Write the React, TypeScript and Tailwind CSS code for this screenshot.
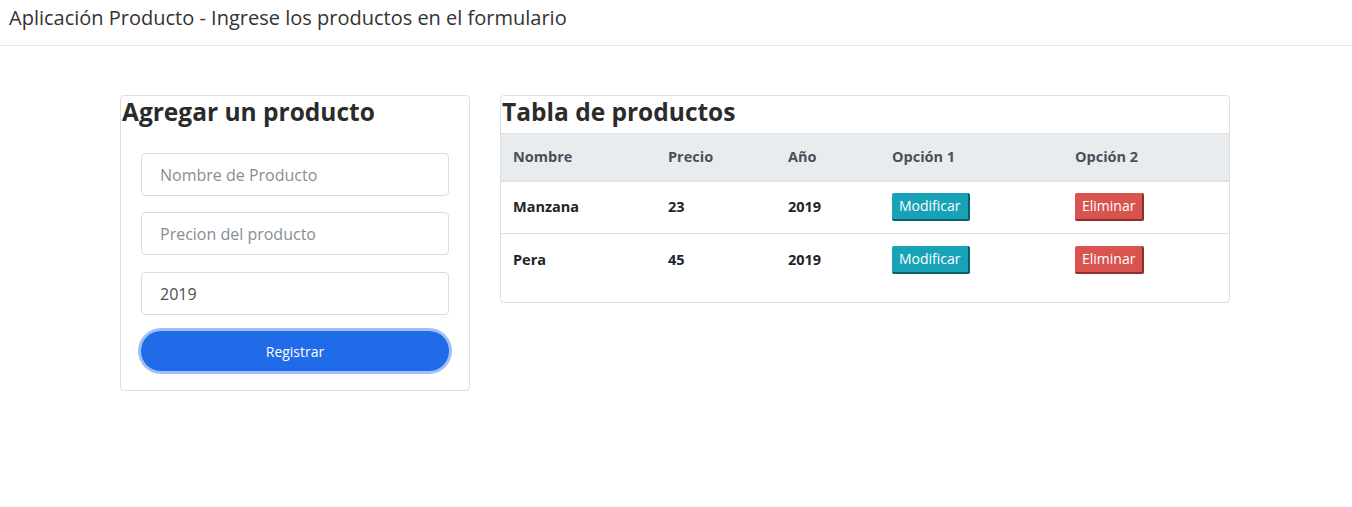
import React from "react";

const font = { fontFamily: '"Open Sans", "Noto Sans", sans-serif' };

function Btn({ kind, children }: { kind: "info" | "danger"; children: React.ReactNode }) {
  const cls =
    kind === "info"
      ? "bg-[#17a2b8] border-r-2 border-b-2 border-[#0e5f6c]"
      : "bg-[#d9534f] border-r-2 border-b-2 border-[#8e2f2c]";
  return (
    <button className={`${cls} h-[28px] px-[7px] rounded-[2px] text-white text-[14px] leading-none align-middle`}>
      {children}
    </button>
  );
}

export default function App() {
  const rows = [
    { n: "Manzana", p: "23", a: "2019" },
    { n: "Pera", p: "45", a: "2019" },
  ];
  const inputCls =
    "h-[43px] w-full border border-[#dcdcdc] rounded-[4px] px-[18px] text-[16px] text-[#495057] placeholder:text-[#868e96] outline-none";
  return (
    <div className="min-h-[507px] bg-white text-[#212529]" style={font}>
      <div className="h-[46px] border-b border-[#e5e5e5] pl-[9px] pt-[4px] text-[20px] leading-[28px] text-[#333]">
        Aplicación Producto - Ingrese los productos en el formulario
      </div>
      <div className="flex items-start gap-[30px] pl-[120px] pt-[49px]">
        <div className="w-[350px] border border-[#dfdfdf] rounded-[4px] pb-[19px]">
          <h2 className="text-[24.5px] font-bold leading-[32px] text-[#2b2b2b] pl-[1px]">Agregar un producto</h2>
          <div className="px-[20px] pt-[25px] flex flex-col">
            <input className={inputCls} placeholder="Nombre de Producto" />
            <input className={`${inputCls} mt-[16px]`} placeholder="Precion del producto" />
            <input className={`${inputCls} mt-[17px]`} defaultValue="2019" />
            <button className="mt-[16px] h-[40px] rounded-[20px] bg-[#206be8] text-white text-[14px] ring-[3px] ring-[#9ec0f7]">
              Registrar
            </button>
          </div>
        </div>
        <div className="w-[730px] border border-[#dfdfdf] rounded-[4px] pb-[15px]">
          <h2 className="text-[24.5px] font-bold leading-[32px] text-[#2b2b2b] pl-[1px] pb-[5px]">Tabla de productos</h2>
          <table className="w-full border-collapse text-[14.5px]">
            <thead>
              <tr className="bg-[#e9ecef] border-t border-[#dee2e6] border-b-2 text-[#495057]">
                <th className="w-[155px] h-[47px] text-left pl-[12px] font-bold">Nombre</th>
                <th className="w-[120px] text-left pl-[12px] font-bold">Precio</th>
                <th className="w-[104px] text-left pl-[12px] font-bold">Año</th>
                <th className="w-[183px] text-left pl-[12px] font-bold">Opción 1</th>
                <th className="text-left pl-[12px] font-bold">Opción 2</th>
              </tr>
            </thead>
            <tbody>
              {rows.map((r, i) => (
                <tr key={r.n} className={i === 0 ? "border-b border-[#dee2e6]" : ""}>
                  <td className="h-[53px] pl-[12px] font-bold text-[#212529]">{r.n}</td>
                  <td className="pl-[12px] font-bold">{r.p}</td>
                  <td className="pl-[12px] font-bold">{r.a}</td>
                  <td className="pl-[12px]">
                    <Btn kind="info">Modificar</Btn>
                  </td>
                  <td className="pl-[12px]">
                    <Btn kind="danger">Eliminar</Btn>
                  </td>
                </tr>
              ))}
            </tbody>
          </table>
        </div>
      </div>
    </div>
  );
}
